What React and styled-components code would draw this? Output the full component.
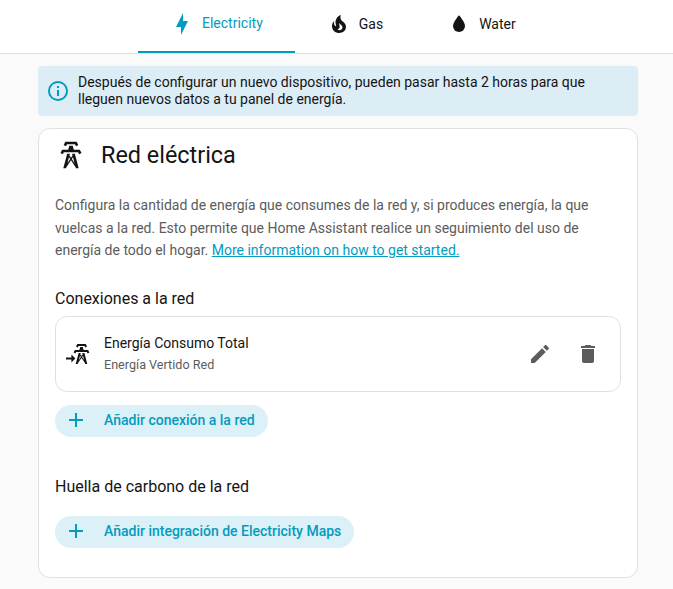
import React from "react";
import styled, { createGlobalStyle } from "styled-components";

const TOWER = "M8.28,5.45L6.5,4.55L7.76,2H16.23L17.5,4.55L15.72,5.45L15,4H9L8.28,5.45M18.62,8H14.09L13.3,5H10.7L9.91,8H5.38L4.1,10.55L5.89,11.45L6.62,10H17.38L18.1,11.45L19.89,10.55L18.62,8M17.77,22H15.7L15.46,21.1L12,15.9L8.53,21.1L8.3,22H6.23L9.12,11H11.19L10.83,12.35L12,14.1L13.16,12.35L12.81,11H14.88L17.77,22M11.4,15L10.5,13.65L9.32,18.13L11.4,15M14.68,18.12L13.5,13.64L12.6,15L14.68,18.12Z";
const FLASH = "M11 15H6L13 1V9H18L11 23V15Z";
const FIRE = "M17.66 11.2C17.43 10.9 17.15 10.64 16.89 10.38C16.22 9.78 15.46 9.35 14.82 8.72C13.33 7.26 13 4.85 13.95 3C13 3.23 12.17 3.75 11.46 4.32C8.87 6.4 7.85 10.07 9.07 13.22C9.11 13.32 9.15 13.42 9.15 13.55C9.15 13.77 9 13.97 8.8 14.05C8.57 14.15 8.33 14.09 8.14 13.93C8.08 13.88 8.04 13.83 8 13.76C6.87 12.33 6.69 10.28 7.45 8.64C5.78 10 4.87 12.3 5 14.47C5.06 14.97 5.12 15.47 5.29 15.97C5.43 16.57 5.7 17.17 6 17.7C7.08 19.43 8.95 20.67 10.96 20.92C13.1 21.19 15.39 20.8 17.03 19.32C18.86 17.66 19.5 15 18.56 12.72L18.43 12.46C18.22 12 17.66 11.2 17.66 11.2M14.5 17.5C14.22 17.74 13.76 18 13.4 18.1C12.28 18.5 11.16 17.94 10.5 17.28C11.69 17 12.4 16.12 12.61 15.23C12.78 14.43 12.46 13.77 12.33 13C12.21 12.26 12.23 11.63 12.5 10.94C12.69 11.32 12.89 11.7 13.13 12C13.9 13 15.11 13.44 15.37 14.8C15.41 14.94 15.43 15.08 15.43 15.23C15.46 16.05 15.1 16.95 14.5 17.5H14.5Z";
const WATER = "M12,20A6,6 0 0,1 6,14C6,10 12,3.25 12,3.25C12,3.25 18,10 18,14A6,6 0 0,1 12,20Z";
const PENCIL = "M20.71,7.04C21.1,6.65 21.1,6 20.71,5.63L18.37,3.29C18,2.9 17.35,2.9 16.96,3.29L15.12,5.12L18.87,8.87M3,17.25V21H6.75L17.81,9.93L14.06,6.18L3,17.25Z";
const TRASH = "M19,4H15.5L14.5,3H9.5L8.5,4H5V6H19M6,19A2,2 0 0,0 8,21H16A2,2 0 0,0 18,19V7H6V19Z";
const PLUS = "M19,13H13V19H11V13H5V11H11V5H13V11H19V13Z";
const INFO = "M11,9H13V7H11M12,20C7.59,20 4,16.41 4,12C4,7.59 7.59,4 12,4C16.41,4 20,7.59 20,12C20,16.41 16.41,20 12,20M12,2A10,10 0 0,0 2,12A10,10 0 0,0 12,22A10,10 0 0,0 22,12A10,10 0 0,0 12,2M11,17H13V11H11V17Z";

const Global = createGlobalStyle`
  html, body { margin: 0; padding: 0; background: #fafafa; }
  body { font-family: Roboto, "Liberation Sans", sans-serif; color: #141414; }
  * { box-sizing: border-box; }
`;

const Page = styled.div`
  width: 673px;
  height: 589px;
  overflow: hidden;
`;

const TabBar = styled.nav`
  display: flex;
  height: 54px;
  padding-left: 138px;
  background: #fff;
  border-bottom: 1px solid #e0e0e0;
`;

const Tab = styled.div`
  display: flex;
  align-items: center;
  gap: 8px;
  height: 53px;
  padding: 0 32px 3px;
  font-size: 14px;
  color: ${(p) => (p.$active ? "#039bbe" : "#141414")};
  border-bottom: 2px solid ${(p) => (p.$active ? "#039bbe" : "transparent")};
  span { position: relative; top: ${(p) => (p.$active ? "-1px" : "0")}; }
`;

const Icon = styled.svg.attrs({ viewBox: "0 0 24 24" })`
  display: block;
  flex: none;
  overflow: visible;
  width: ${(p) => p.$size || 24}px;
  height: ${(p) => p.$size || 24}px;
  fill: ${(p) => p.$color || "currentColor"};
`;

const Content = styled.main`
  display: flex;
  flex-direction: column;
  gap: 12px;
  width: 600px;
  margin: 12px 0 0 38px;
`;

const Alert = styled.div`
  display: flex;
  align-items: center;
  gap: 8px;
  height: 50px;
  padding: 0 8px;
  border-radius: 4px;
  background: #dcedf6;
  font-size: 14px;
  line-height: 17.5px;
  color: #141414;
`;

const Card = styled.section`
  height: 450px;
  padding: 0 16px;
  background: #fff;
  border: 1px solid #e0e0e0;
  border-radius: 12px;
`;

const CardHeader = styled.header`
  display: flex;
  align-items: center;
  gap: 14px;
  height: 50px;
  padding: 2px 0 0;
`;

const Title = styled.h1`
  margin: 0;
  font-size: 23.4px;
  font-weight: 400;
  line-height: 32px;
  color: #141414;
`;

const Description = styled.p`
  margin: 15.3px 0 0;
  font-size: 14px;
  line-height: 22.5px;
  color: #5c5c5c;
  a { color: #039bbe; text-decoration: underline; }
`;

const SectionTitle = styled.h2`
  margin: ${(p) => p.$top}px 0 0;
  font-size: 16px;
  font-weight: 400;
  line-height: 20px;
  color: #141414;
`;

const Row = styled.div`
  display: flex;
  align-items: center;
  height: 76px;
  margin-top: 7px;
  padding: 0 9px;
  border: 1px solid #e0e0e0;
  border-radius: 12px;
  background: #fff;
`;

const RowText = styled.div`
  flex: 1;
  margin-left: 15px;
  font-size: 14px;
  line-height: 20px;
`;

const RowTitle = styled.div`
  color: #141414;
`;

const RowSub = styled.div`
  margin-top: 2px;
  font-size: 12.6px;
  color: #5c5c5c;
`;

const RowActions = styled.div`
  display: flex;
  gap: 24px;
  color: #5c5c5c;
  margin-right: 11px;
`;

const AddButton = styled.button`
  display: inline-flex;
  align-items: center;
  gap: 16px;
  height: 32px;
  margin-top: ${(p) => p.$top}px;
  padding: 0 13px 2px 9px;
  border: 0;
  border-radius: 16px;
  background: #dcf0f7;
  color: #039bbe;
  font-family: inherit;
  font-size: 14px;
  font-weight: 500;
`;

function TowerImport() {
  return (
    <Icon>
      <path transform="translate(4.5 0)" d={TOWER} />
      <path d="M1 15.5H6.4V12.6L10.4 16.5L6.4 20.4V17.5H1Z" />
    </Icon>
  );
}

export default function App() {
  return (
    <Page>
      <Global />
      <TabBar>
        <Tab $active>
          <Icon><path d={FLASH} /></Icon>
          <span>Electricity</span>
        </Tab>
        <Tab>
          <Icon><path d={FIRE} /></Icon>
          <span>Gas</span>
        </Tab>
        <Tab>
          <Icon><path d={WATER} /></Icon>
          <span>Water</span>
        </Tab>
      </TabBar>
      <Content>
        <Alert>
          <Icon $color="#039bbe"><path d={INFO} /></Icon>
          <div>
            Después de configurar un nuevo dispositivo, pueden pasar hasta 2 horas para que
            <br />
            lleguen nuevos datos a tu panel de energía.
          </div>
        </Alert>
        <Card>
          <CardHeader>
            <Icon $size={32}><path d={TOWER} /></Icon>
            <Title>Red eléctrica</Title>
          </CardHeader>
          <Description>
            Configura la cantidad de energía que consumes de la red y, si produces energía, la que
            vuelcas a la red. Esto permite que Home Assistant realice un seguimiento del uso de
            energía de todo el hogar. <a href="#start">More information on how to get started.</a>
          </Description>
          <SectionTitle $top={27.4}>Conexiones a la red</SectionTitle>
          <Row>
            <TowerImport />
            <RowText>
              <RowTitle>Energía Consumo Total</RowTitle>
              <RowSub>Energía Vertido Red</RowSub>
            </RowText>
            <RowActions>
              <Icon><path d={PENCIL} /></Icon>
              <Icon><path d={TRASH} /></Icon>
            </RowActions>
          </Row>
          <AddButton $top={13}>
            <Icon $color="#039bbe"><path d={PLUS} /></Icon>
            Añadir conexión a la red
          </AddButton>
          <SectionTitle $top={40}>Huella de carbono de la red</SectionTitle>
          <AddButton $top={19}>
            <Icon $color="#039bbe"><path d={PLUS} /></Icon>
            Añadir integración de Electricity Maps
          </AddButton>
        </Card>
      </Content>
    </Page>
  );
}
